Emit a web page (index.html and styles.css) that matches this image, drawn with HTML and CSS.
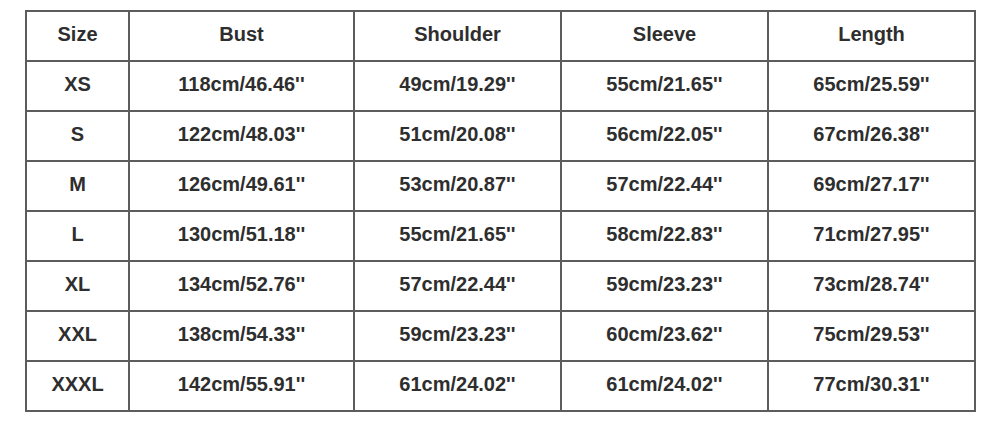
FILE: index.html
```html
<!DOCTYPE html>
<html>
<head>
<meta charset="utf-8">
<link rel="stylesheet" href="styles.css">
</head>
<body>
<table class="size-table">
  <colgroup>
    <col class="c-size"><col class="c-bust"><col class="c-sh"><col class="c-sl"><col class="c-len">
  </colgroup>
  <thead>
    <tr><th>Size</th><th>Bust</th><th>Shoulder</th><th>Sleeve</th><th>Length</th></tr>
  </thead>
  <tbody>
    <tr><td>XS</td><td>118cm/46.46''</td><td>49cm/19.29''</td><td>55cm/21.65''</td><td>65cm/25.59''</td></tr>
    <tr><td>S</td><td>122cm/48.03''</td><td>51cm/20.08''</td><td>56cm/22.05''</td><td>67cm/26.38''</td></tr>
    <tr><td>M</td><td>126cm/49.61''</td><td>53cm/20.87''</td><td>57cm/22.44''</td><td>69cm/27.17''</td></tr>
    <tr><td>L</td><td>130cm/51.18''</td><td>55cm/21.65''</td><td>58cm/22.83''</td><td>71cm/27.95''</td></tr>
    <tr><td>XL</td><td>134cm/52.76''</td><td>57cm/22.44''</td><td>59cm/23.23''</td><td>73cm/28.74''</td></tr>
    <tr><td>XXL</td><td>138cm/54.33''</td><td>59cm/23.23''</td><td>60cm/23.62''</td><td>75cm/29.53''</td></tr>
    <tr><td>XXXL</td><td>142cm/55.91''</td><td>61cm/24.02''</td><td>61cm/24.02''</td><td>77cm/30.31''</td></tr>
  </tbody>
</table>
</body>
</html>
```
FILE: styles.css
```css
html, body {
  margin: 0;
  padding: 0;
  background: #ffffff;
}
body {
  padding: 10px 0 0 25px;
  font-family: "Liberation Sans", Arial, sans-serif;
}
.size-table {
  border-collapse: collapse;
  table-layout: fixed;
  width: 949px;
  color: #2e2e2e;
}
.c-size { width: 103px; }
.c-bust { width: 225px; }
.c-sh { width: 207px; }
.c-sl { width: 207px; }
.c-len { width: 207px; }
.size-table th,
.size-table td {
  border: 2px solid #5c5c5c;
  height: 50px;
  padding: 0 0 3px 0;
  text-align: center;
  vertical-align: middle;
  font-size: 20px;
  font-weight: bold;
  box-sizing: border-box;
}
```
